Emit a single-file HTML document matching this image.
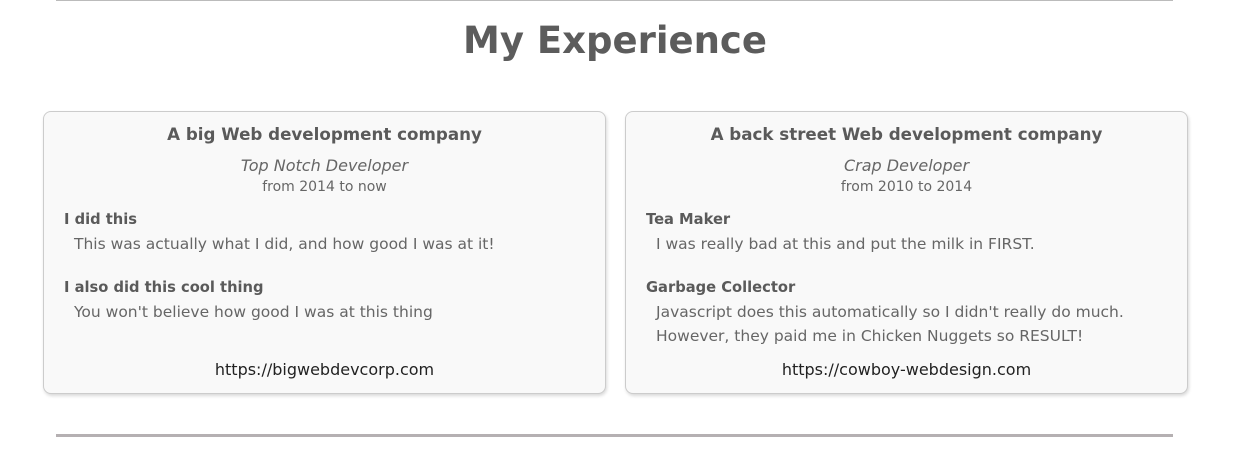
<!DOCTYPE html>
<html><head><style>
body{margin:0;width:1247px;height:456px;background:#fff;font-family:"DejaVu Sans","Liberation Sans",sans-serif;color:#5a5a5a;position:relative;overflow:hidden}
.hr1{position:absolute;left:56px;width:1117px;top:0;height:1px;background:#bbb}
.hr2{position:absolute;left:56px;width:1117px;top:434px;height:3px;background:#b5b0b2}
h1{position:absolute;top:19px;left:0;width:1230px;text-align:center;margin:0;font-size:37px;font-weight:bold;color:#5c5c5c}
.card{position:absolute;top:111px;width:561px;height:281px;border:1px solid #ccc;border-radius:8px;background:#f9f9f9;box-shadow:1px 2px 3px rgba(0,0,0,.15)}
.c1{left:43px}.c2{left:625px}
.t{position:absolute;top:12px;width:100%;text-align:center;font-weight:bold;font-size:16.7px}
.r{position:absolute;top:44px;width:100%;text-align:center;font-style:italic;font-size:16px;color:#666}
.d{position:absolute;top:67px;width:100%;text-align:center;font-size:14px;color:#666}
.h{position:absolute;left:20px;font-weight:bold;font-size:14.7px}
.p{position:absolute;left:30px;font-size:15.5px;line-height:24px;color:#666}
.u{position:absolute;width:100%;text-align:center;font-size:16px;color:#222}
</style></head><body>
<div class="hr1"></div>
<h1>My Experience</h1>
<div class="card c1">
<div class="t">A big Web development company</div>
<div class="r">Top Notch Developer</div>
<div class="d">from 2014 to now</div>
<div class="h" style="top:99px">I did this</div>
<div class="p" style="top:120px">This was actually what I did, and how good I was at it!</div>
<div class="h" style="top:167px">I also did this cool thing</div>
<div class="p" style="top:188px">You won't believe how good I was at this thing</div>
<div class="u" style="top:248px">https://bigwebdevcorp.com</div>
</div>
<div class="card c2">
<div class="t">A back street Web development company</div>
<div class="r">Crap Developer</div>
<div class="d">from 2010 to 2014</div>
<div class="h" style="top:99px">Tea Maker</div>
<div class="p" style="top:120px">I was really bad at this and put the milk in FIRST.</div>
<div class="h" style="top:167px">Garbage Collector</div>
<div class="p" style="top:188px">Javascript does this automatically so I didn't really do much.<br>However, they paid me in Chicken Nuggets so RESULT!</div>
<div class="u" style="top:248px">https://cowboy-webdesign.com</div>
</div>
<div class="hr2"></div>
</body></html>
